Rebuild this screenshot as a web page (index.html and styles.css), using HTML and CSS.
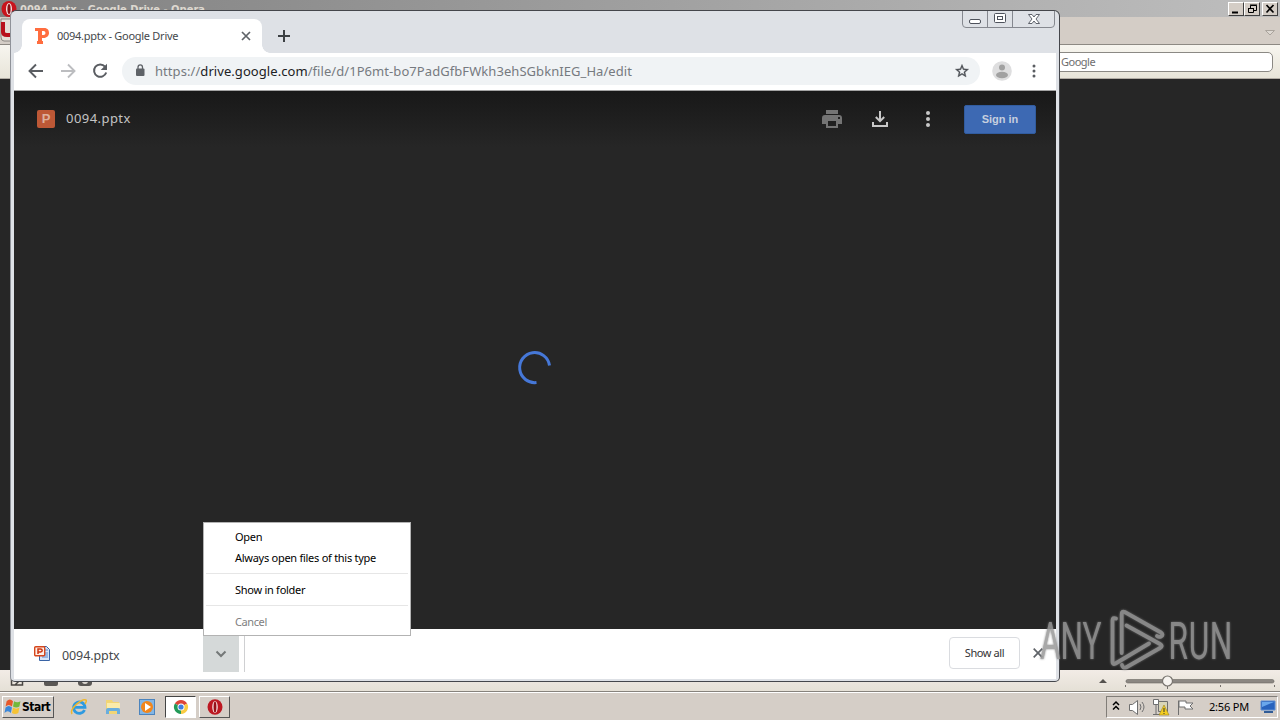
FILE: index.html
```
<!DOCTYPE html>
<html lang="en">
<head>
<meta charset="utf-8">
<title>0094.pptx - Google Drive</title>
<link rel="stylesheet" href="styles.css">
</head>
<body>
<div class="desktop">
  <div class="opera">
    <header class="opera-title">
      <svg class="opera-logo" width="18" height="18" viewBox="0 0 18 18"><ellipse cx="9" cy="9" rx="7.5" ry="8" fill="#c8141c"/><ellipse cx="9" cy="9" rx="3" ry="6" fill="#f4e4e4"/><ellipse cx="9" cy="9" rx="1.6" ry="5" fill="#8e1014"/></svg>
      <span class="opera-name">0094.pptx - Google Drive - Opera</span>
      <div class="classic-buttons">
        <i class="cb"><svg width="14" height="12"><path d="M3 9.500h6" stroke="#000" stroke-width="2"/></svg></i>
        <i class="cb"><svg width="14" height="12"><path d="M5.500 5V2.500h6v5H9M5 2h7M3.500 5.500h5v4h-5zM3 5.500h6" fill="none" stroke="#000"/></svg></i>
        <i class="cb last"><svg width="14" height="12"><path d="M3.500 2l7 7.500M10.500 2l-7 7.500" stroke="#000" stroke-width="1.700"/></svg></i>
      </div>
    </header>
    <div class="opera-tabs">
      <svg width="14" height="26" viewBox="0 0 14 26"><path d="M1 0H14V22H4Q1 22 1 18Z" fill="#e4ded8" stroke="#8b8782"/><path d="M3 3V13Q3 16 7 16H11" fill="none" stroke="#b8101c" stroke-width="4"/></svg>
      <svg width="12" height="8" viewBox="0 0 12 8"><path d="M1.500 2.500h9L6 7z" fill="#ddd8d2" stroke="#aaa49d"/></svg>
    </div>
    <div class="opera-bar"><div class="opera-search">Google</div></div>
    <div class="opera-page"></div>
    <footer class="opera-status">
      <svg width="100" height="16" viewBox="0 0 100 16"><path d="M11.500 4v11h11V4M15 15l5-5" fill="none" stroke="#494642" stroke-width="1.500"/><path d="M44 11h14v3q0 2-2 2H46q-2 0-2-2z" fill="#5b5854"/><path d="M78 10h14v3q0 3-3 3h-8q-3 0-3-3z" fill="#5b5854"/><circle cx="85" cy="11" r="3" fill="#ddd8d0"/></svg>
      <svg width="184" height="20" viewBox="1096 670 184 20"><path d="M1099 683l4-4 4 4z" fill="#55524e"/><rect x="1126" y="679.500" width="148" height="3.500" rx="1.700" fill="#8b8782" stroke="#6c6863" stroke-width=".6"/><path d="M1125.500 685v2M1167.500 686v3M1220.500 685v2M1274.500 685v2" stroke="#77736e"/><circle cx="1167.500" cy="681" r="5" fill="#f7f4f0" stroke="#77736e" stroke-width="1.200"/></svg>
    </footer>
  </div>

  <main class="chrome">
    <div class="tabstrip">
      <div class="tab">
        <svg width="15" height="16" viewBox="0 0 15 16"><path d="M0 0h9c4 0 5 2.500 5 5s-2 5-5.500 5H7v3h1v3H2v-3h1V3H0zM7 3v4h1.500q2 0 2-2T8.500 3z" fill="#ff6d3f" fill-rule="evenodd"/></svg>
        <span class="tab-title">0094.pptx - Google Drive</span>
        <svg width="10" height="10" viewBox="0 0 10 10"><path d="M1 1l8 8M9 1L1 9" stroke="#5f6368" stroke-width="1.700"/></svg>
      </div>
      <svg class="plus" width="12" height="12" viewBox="0 0 12 12"><path d="M6 0v12M0 6h12" stroke="#3c4043" stroke-width="2"/></svg>
      <svg class="frame-buttons" width="94" height="18" viewBox="0 0 94 18"><path d="M.5 0V13Q.5 16.500 4 16.500H89Q92.500 16.500 92.500 13V0M25.500 0V16M50.500 0V16" fill="none" stroke="#85888f"/><rect x="7.500" y="8.500" width="11" height="4" rx="1.500" fill="#fff" stroke="#4e525c"/><rect x="32.500" y="2.500" width="11" height="9" rx="1" fill="#fff" stroke="#4e525c"/><rect x="35.500" y="5.500" width="5" height="3" fill="#fff" stroke="#4e525c"/><path d="M66.500 3.500h3.500l2 2.500 2-2.500h3.500L74 8l3.500 4.500H74L72 10l-2 2.500h-3.500L70 8z" fill="#fff" stroke="#4e525c" stroke-width=".9"/></svg>
    </div>
    <div class="toolbar">
      <svg class="nav" width="16" height="16" viewBox="0 0 16 16"><path d="M15 8H2M8 1.500L1.500 8 8 14.500" fill="none" stroke="#5a5d62" stroke-width="1.900"/></svg>
      <svg class="nav" width="16" height="16" viewBox="0 0 16 16"><path d="M1 8h13M8 1.500L14.500 8 8 14.500" fill="none" stroke="#bcbdc0" stroke-width="1.900"/></svg>
      <svg class="nav" width="16" height="16" viewBox="0 0 16 16"><path d="M13 3.600A6.200 6.200 0 1 0 14.200 9.500" fill="none" stroke="#5a5d62" stroke-width="2"/><path d="M15 .7V7H8.700z" fill="#5a5d62"/></svg>
      <div class="omnibox">
        <svg width="10" height="13" viewBox="0 0 10 13"><rect x="1" y="4.500" width="8.500" height="7.500" rx="1" fill="#5f6368"/><path d="M3 5V3.200a2.200 2.200 0 0 1 4.500 0V5" fill="none" stroke="#5f6368" stroke-width="1.300"/></svg>
        <span class="url">https://<b>drive.google.com</b>/file/d/1P6mt-bo7PadGfbFWkh3ehSGbknIEG_Ha/edit</span>
        <svg width="16" height="16" viewBox="0 0 24 24"><path d="M22 9.240l-7.190-.62L12 2 9.190 8.630 2 9.240l5.460 4.730L5.820 21 12 17.270 18.180 21l-1.630-7.030L22 9.240zM12 15.400l-3.760 2.270 1-4.280-3.320-2.880 4.380-.38L12 6.100l1.710 4.040 4.380.38-3.320 2.880 1 4.280L12 15.400z" fill="#494d52" stroke="#494d52" stroke-width=".5"/></svg>
      </div>
      <svg class="avatar" width="20" height="20" viewBox="0 0 20 20"><circle cx="10" cy="10" r="9.800" fill="#dededf"/><circle cx="10" cy="6.500" r="3" fill="#a1a1a1"/><ellipse cx="10" cy="14" rx="6" ry="3.200" fill="#a1a1a1"/></svg>
      <svg class="dots" width="4" height="14" viewBox="0 0 4 14"><g fill="#5a5d62"><circle cx="2" cy="2" r="1.500"/><circle cx="2" cy="7" r="1.500"/><circle cx="2" cy="12" r="1.500"/></g></svg>
    </div>
    <section class="viewer">
      <div class="viewer-bar">
        <span class="ppt">P</span>
        <span class="doc-name">0094.pptx</span>
        <svg width="20" height="18" viewBox="0 0 20 18"><path d="M4 0h12v4H4zM3 5h14q3 0 3 3v6h-4v4H4v-4H0V8q0-3 3-3zm3 6v5h8v-5zM16 7v2h2V7z" fill="#747474" fill-rule="evenodd"/></svg>
        <svg width="16" height="16" viewBox="0 0 16 16"><path d="M8 0v10M3.800 6L8 10.200 12.200 6M1 11v4h14v-4" fill="none" stroke="#c8c8c8" stroke-width="2"/></svg>
        <svg width="6" height="16" viewBox="0 0 6 16"><g fill="#c8c8c8"><circle cx="3" cy="2" r="2"/><circle cx="3" cy="8" r="2"/><circle cx="3" cy="14" r="2"/></g></svg>
        <span class="signin">Sign in</span>
      </div>
      <div class="stage"><svg width="34" height="34" viewBox="0 0 34 34"><path d="M31.500 14.500A15 15 0 1 0 18.500 31.500" fill="none" stroke="#4678d8" stroke-width="3"/></svg></div>
    </section>
    <footer class="shelf">
      <svg class="file-icon" width="17" height="17" viewBox="0 0 17 17"><path d="M5.500 1.500h7l3 3v11h-10z" fill="#d7e5f8" stroke="#3963a5"/><path d="M8 8h6M8 10h6M8 12h6M11 5h3" stroke="#5b88cb"/><rect x=".7" y="1.700" width="10" height="9" rx="1" fill="#fff0e8" stroke="#d6471c" stroke-width="1.400"/><path d="M4 9V4h2.500q1.700 0 1.700 1.400T6.500 6.900H4" fill="none" stroke="#ce3510" stroke-width="1.500"/></svg>
      <span class="file-name">0094.pptx</span>
      <span class="drop"><svg width="12" height="8" viewBox="0 0 12 8"><path d="M1.500 1.500L6 6l4.500-4.500" fill="none" stroke="#747878" stroke-width="2"/></svg></span>
      <span class="show-all">Show all</span>
      <svg class="shelf-close" width="10" height="10" viewBox="0 0 10 10"><path d="M.7.7l8.600 8.600M9.300.7L.7 9.300" stroke="#5f6368" stroke-width="1.700"/></svg>
    </footer>
  </main>

  <div class="menu">
    <span class="item">Open</span><span class="item">Always open files of this type</span>
    <hr><span class="item">Show in folder</span>
    <hr><span class="item off">Cancel</span>
  </div>

  <svg class="watermark" width="200" height="66" viewBox="1036 606 200 66">
    <g class="mark-text">
      <text transform="translate(1040 659) scale(.62 1)" textLength="99" font-size="51">ANY</text>
      <text transform="translate(1168.500 659) scale(.62 1)" textLength="103" font-size="51">RUN</text>
    </g>
    <path class="mark-lines" d="M1116 618.500q-3.500-1.500-3.500 2V662q0 3 3 1.500L1149 643.500M1121.700 653V614q0-3.500 3-2L1161 632.500q3 2.500 0 4-2 1-4-.5M1126.500 625.500L1160 644q3.500 2 0 4L1126 667.500q-3.500 1-4-2.500"/>
  </svg>

  <div class="taskbar">
    <div class="start"><svg width="18" height="17" viewBox="0 0 16 16"><path d="M2 3q3-3 6 0L7 8Q4 5 1 8z" fill="#e8582a"/><path d="M9 3q3 2 6 0l-1 5q-3 2-6 0z" fill="#73b83b"/><path d="M1 9q3-3 6 0l-1 5q-3-3-6 0z" fill="#3b87d9"/><path d="M8 9q3 2 6 0l-1 5q-3 2-6 0z" fill="#f6c334"/></svg><span class="start-text">Start</span></div>
    <div class="task"><svg width="18" height="18" viewBox="0 0 18 18"><path d="M14.500 12A5.700 5.700 0 1 1 15 9.300H5" fill="none" stroke="#2e9ae0" stroke-width="2.800"/><path d="M2 16C-1 11 12 0 16 2q1 1-1 4" fill="none" stroke="#efb72d" stroke-width="1.500"/></svg></div>
    <div class="task"><svg width="18" height="18" viewBox="0 0 18 18"><path d="M2 2h6l1 2h6v12H2z" fill="#f1d575"/><path d="M3 5h13v5H3z" fill="#faebaa"/><path d="M2 16v-4q0-2 2-2h10q2 0 2 2v4h-3v-3H5v3z" fill="#69aede"/></svg></div>
    <div class="task"><svg width="16" height="16" viewBox="0 0 16 16"><rect x=".5" y=".5" width="15" height="15" fill="#83b6e5" stroke="#4c84bd"/><circle cx="8" cy="8" r="6" fill="#f2861b"/><path d="M6 4l6 4-6 4z" fill="#fff"/></svg></div>
    <div class="task pressed"><svg width="14" height="14" viewBox="0 0 14 14"><path d="M7 7L.9 3.500A7 7 0 0 1 13.100 3.500z" fill="#dc4437"/><path d="M7 7L.9 3.500A7 7 0 0 0 7 14z" fill="#229a58"/><path d="M7 7L7 14A7 7 0 0 0 13.100 3.500z" fill="#f9cb42"/><circle cx="7" cy="7" r="3.500" fill="#fff"/><circle cx="7" cy="7" r="2.600" fill="#3e7de0"/></svg></div>
    <div class="task raised"><svg width="16" height="16" viewBox="0 0 16 16"><ellipse cx="8" cy="8" rx="7.500" ry="7.800" fill="#bd1721"/><ellipse cx="8" cy="8" rx="2.800" ry="6" fill="#f5dada"/><ellipse cx="8" cy="8" rx="1.400" ry="5.500" fill="#971018"/></svg></div>
    <div class="tray">
      <svg class="tray-icons" width="94" height="20" viewBox="0 0 94 20"><path d="M6 8l3-3 3 3M6 12.500l3-3 3 3" fill="none" stroke="#000" stroke-width="1.500"/><g fill="#fff" stroke="#6f6f6f"><path d="M22.500 7.500h3l5-4v14l-5-4h-3z"/><path d="M33 7q2 3 0 6M35 5q4 5 0 10" fill="none"/><path d="M51.500 4.500h9v10h-9z" fill="#d9d5b8"/><path d="M46.500 2.500h5v5h-5zM49 8v9M46 17.500h12"/><path d="M71.500 18V3.500M72 4h7v2h7l-3 3 3 3h-8v-2h-6z"/></g><path d="M52 18l5-10 5 10z" fill="#f5ce20" stroke="#9a8017" stroke-width=".6"/><path d="M57 11v4M57 16v1" stroke="#333"/></svg>
      <span class="clock">2:56 PM</span>
      <svg width="16" height="14" viewBox="0 0 16 14"><path d="M1 1h14v9H1z" fill="#2863bd" stroke="#5d8ed2"/><path d="M2 2h12L2 7z" fill="#69a7ec"/><path d="M4 12h9" stroke="#315c96" stroke-width="2"/></svg>
    </div>
  </div>
</div>
</body>
</html>
```
FILE: styles.css
```
* { box-sizing: border-box; }
body { margin: 0; overflow: hidden; font-family: "Noto Sans", sans-serif; font-size: 11px; color: #111; }
svg { display: block; flex: none; overflow: visible; }
span { white-space: nowrap; }
.desktop { position: relative; width: 1280px; height: 720px; background: #d5cec7; overflow: hidden; }
.opera { height: 692px; display: flex; flex-direction: column; }
.opera-title { height: 17px; flex: none; display: flex; background: linear-gradient(90deg, #818181, #bebebe); color: #ddd8d0; }
.opera-logo { margin: 0 2px 0 0; }
.opera-name { font: bold 11px/19px "DejaVu Sans Condensed", "DejaVu Sans", sans-serif; letter-spacing: 0.02px; }
.classic-buttons { display: flex; margin: 2px 2px 0 auto; }
.cb { width: 16px; height: 14px; background: #d4cdc6; border: 1px solid; border-color: #fff #404040 #404040 #fff; overflow: hidden; }
.cb.last { margin-left: 2px; }
.opera-tabs { height: 28px; flex: none; display: flex; justify-content: space-between; align-items: center; padding: 2px 4px 0 0; background: #d4cdc6; border-bottom: 1px solid #8d8983; }
.opera-bar { height: 34px; flex: none; padding: 7px 7px 0 0; background: linear-gradient(#f7f5ef, #e8e5d9); border-bottom: 1px solid #b1aca4; }
.opera-search { height: 20px; margin-left: auto; width: 240px; padding-left: 27px; border: 1px solid #8b8984; border-radius: 5px; background: #fff; line-height: 17px; color: #6e6e6e; letter-spacing: -.5px; }
.opera-page { flex: 1; background: #262626; }
.opera-status { height: 22px; flex: none; display: flex; justify-content: space-between; background: linear-gradient(#f2ece6, #e5e0d6); border-bottom: 1px solid #87837d; }

.chrome { position: absolute; left: 10px; top: 10px; width: 1050px; height: 672px; display: flex; flex-direction: column; padding: 0 3px; background: #dee1e6; border: 1px solid #44464b; border-left-color: #8f9299; border-radius: 6px 6px 5px 5px; }
.tabstrip { height: 42px; flex: none; display: flex; }
.tab { position: relative; width: 240px; height: 34px; margin: 8px 0 0 8px; padding: 0 11px 0 13px; display: flex; align-items: center; background: #fff; border-radius: 8px 8px 0 0; }
.tab::before, .tab::after { content: ""; position: absolute; bottom: 0; width: 8px; height: 8px; }
.tab::before { left: -8px; background: radial-gradient(circle at 0 0, transparent 7.500px, #fff 8px); }
.tab::after { right: -8px; background: radial-gradient(circle at 100% 0, transparent 7.500px, #fff 8px); }
.tab-title { margin: 0 auto 0 7px; padding-bottom: 2px; color: #45484b; letter-spacing: -.28px; }
.plus { margin: 19px auto 0 16px; }
.frame-buttons { margin: 0; }
.toolbar { height: 37px; flex: none; display: flex; align-items: center; padding: 0 20px 2px 14px; background: #fff; }
.nav { margin-right: 16px; }
.omnibox { width: 858px; height: 28px; margin-left: -2px; display: flex; align-items: center; padding: 0 10px 0 13px; background: #f0f3f5; border-radius: 14px; }
.url { margin: 0 auto 0 10px; font-size: 13px; color: #767a7f; letter-spacing: .065px; }
.url b { font-weight: 400; color: #202124; }
.avatar { margin-left: 12px; }
.dots { margin: 0 0 0 auto; }
.viewer { height: 539px; flex: none; border-top: 1px solid #a3a3a3; background: #262626; display: flex; flex-direction: column; }
.viewer-bar { height: 56px; flex: none; display: flex; align-items: center; padding: 0 20px 0 23px; background: linear-gradient(#181818, #262626); }
.ppt { width: 18px; height: 18px; border-radius: 2px; background: #bd5836; color: #ddb09e; font: bold 13px/18px "Liberation Sans", sans-serif; text-align: center; }
.doc-name { margin: 0 auto 0 11px; padding-bottom: 2px; font-size: 13px; color: #c4c4c4; letter-spacing: .45px; }
.viewer-bar svg:nth-of-type(1) { margin-right: 30px; }
.viewer-bar svg:nth-of-type(2) { margin-right: 37px; }
.viewer-bar svg:nth-of-type(3) { margin-right: 33px; }
.signin { width: 72px; height: 29px; background: #3d69b3; border: 1px solid #315c9f; border-radius: 2px; font: bold 11px/27px "Liberation Sans", sans-serif; color: #c6cfdf; text-align: center; }
.stage { flex: 1; display: flex; justify-content: center; padding-top: 204px; }
.shelf { height: 50px; flex: none; display: flex; align-items: center; background: #fff; padding-right: 13px; }
.file-icon { margin: 0 11px 2px 20px; }
.file-name { width: 142px; font-size: 12.500px; color: #45484b; padding-top: 2px; letter-spacing: -.1px; }
.drop { align-self: flex-start; width: 42px; height: 43px; border-right: 1px solid #cfd0d2; display: flex; align-items: center; justify-content: center; padding: 6px 6px 0 0; background: linear-gradient(90deg, #d5d9d9 36px, #fff 36px); margin-left: -1px; }
.show-all { margin-left: auto; width: 71px; height: 32px; border: 1px solid #dadce0; border-radius: 4px; line-height: 30px; text-align: center; color: #333; margin-bottom: 2px; letter-spacing: -.4px; }
.shelf-close { margin: 0 0 2px 13px; }

.menu { position: absolute; left: 203px; top: 522px; width: 208px; height: 114px; display: flex; flex-direction: column; background: #fff; border: 1px solid #b3b3b3; padding: 3px 2px 0; }
.item { height: 21px; line-height: 21px; padding-left: 29px; color: #000; letter-spacing: -.27px; }
.menu hr { width: 100%; height: 1px; margin: 5px 0; border: 0; background: #e6e6e6; }
.item.off { color: #808080; letter-spacing: -.4px; }
.watermark { position: absolute; left: 1036px; top: 606px; opacity: .85; filter: drop-shadow(0 0 1px #777); }
.mark-text { fill: #999; font-family: Roboto, sans-serif; font-weight: 400; }
.mark-lines { fill: none; stroke: #999; stroke-width: 3.800; stroke-linejoin: round; stroke-linecap: round; }

.taskbar { height: 28px; display: flex; align-items: center; padding: 0 2px; background: #d5cec7; border-top: 1px solid #fff; }
.start { width: 52px; height: 22px; display: flex; align-items: center; padding-left: 1px; border: 1px solid; border-color: #fff #555 #555 #fff; margin-right: 8px; }
.start-text { font: bold 12px "DejaVu Sans Condensed", "DejaVu Sans", sans-serif; letter-spacing: -.5px; color: #000; }
.task { width: 34px; height: 22px; display: flex; align-items: center; justify-content: center; }
.pressed { width: 31px; margin-left: 1px; background: #fff; border: 1px solid; border-color: #444 #fff #fff #444; }
.raised { width: 31px; margin-left: 3px; border: 1px solid; border-color: #fff #555 #555 #fff; }
.tray { margin-left: auto; width: 172px; height: 22px; display: flex; align-items: center; border: 1px solid; border-color: #817d78 #fff #fff #817d78; padding-right: 1px; }
.clock { margin: 0 auto 0 8px; color: #000; letter-spacing: -.2px; }
```
